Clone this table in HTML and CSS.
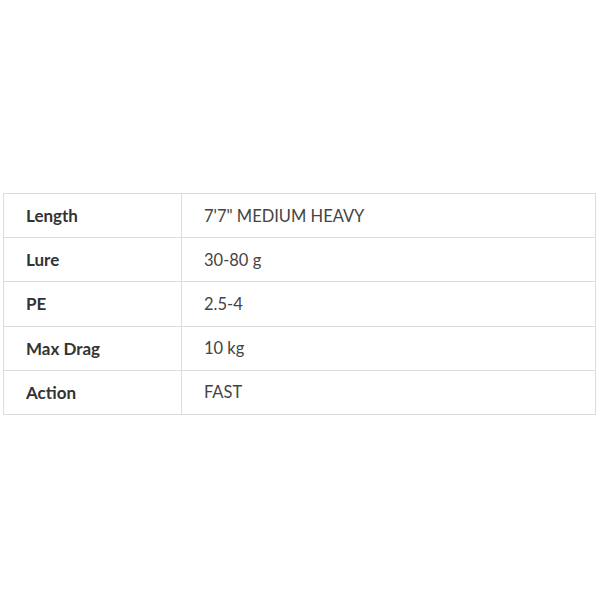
FILE: index.html
```html
<!DOCTYPE html>
<html lang="en">
<head>
<meta charset="utf-8">
<link rel="stylesheet" href="styles.css">
</head>
<body>
<main class="page">
  <table class="specs">
    <tbody>
      <tr><th>Length</th><td>7'7" MEDIUM HEAVY</td></tr>
      <tr><th>Lure</th><td>30-80 g</td></tr>
      <tr><th>PE</th><td>2.5-4</td></tr>
      <tr><th>Max Drag</th><td>10 kg</td></tr>
      <tr><th>Action</th><td>FAST</td></tr>
    </tbody>
  </table>
</main>
</body>
</html>
```
FILE: styles.css
```css
html, body {
  margin: 0;
  padding: 0;
  background: #fff;
}
.page {
  width: 600px;
  height: 600px;
  padding: 193px 0 0 3px;
  box-sizing: border-box;
}
.specs {
  width: 593px;
  border-collapse: collapse;
  font-family: Lato, "Noto Sans", sans-serif;
  color: #3a3a3a;
}
.specs th,
.specs td {
  border: 1px solid #dcdcdc;
  height: 44.2px;
  padding: 0 0 0 22px;
  box-sizing: border-box;
  text-align: left;
  vertical-align: middle;
}
.specs th {
  width: 178px;
  font-size: 17px;
  font-weight: 700;
  color: #333;
}
.specs td {
  font-size: 16.5px;
  font-weight: 400;
  color: #444;
}
```
